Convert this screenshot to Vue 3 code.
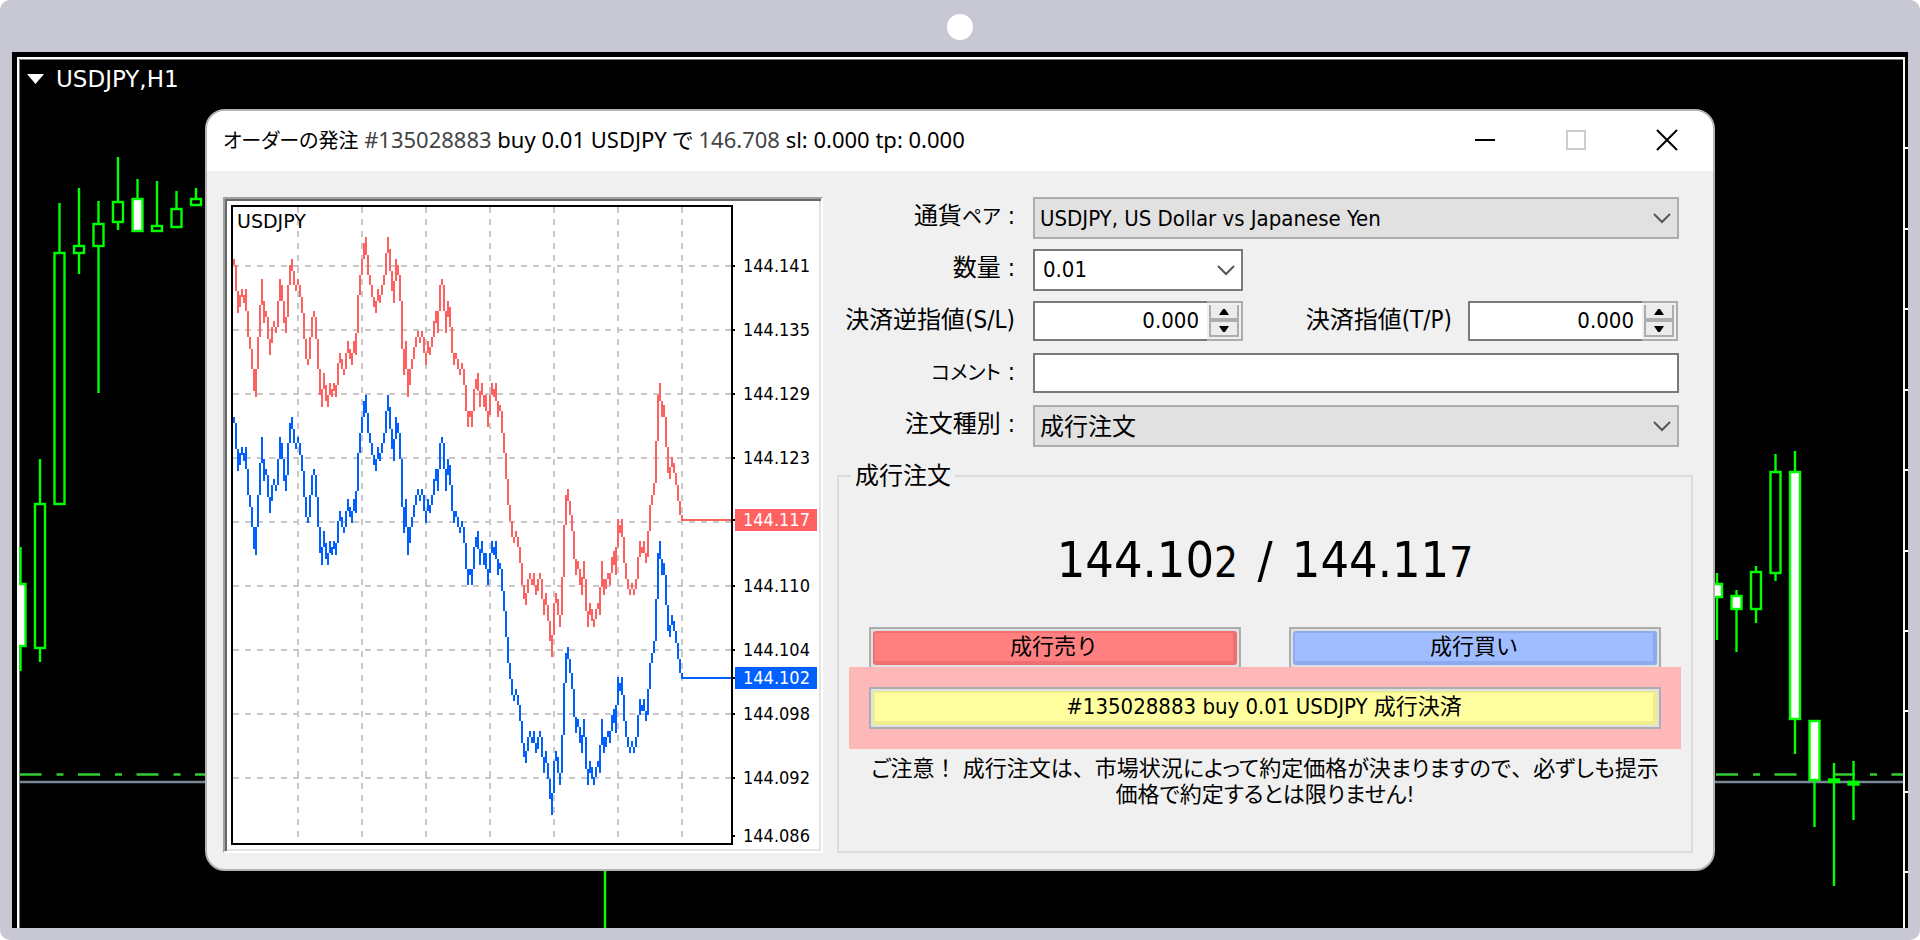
<script setup>
import { ref } from 'vue'

const candles = [
  { x: 20.5, high: 547, top: 583, bottom: 647, low: 671, kind: 'down' },
  { x: 40, high: 459, top: 503, bottom: 649, low: 662, kind: 'up' },
  { x: 59.5, high: 203, top: 252, bottom: 505, low: 505, kind: 'up' },
  { x: 79, high: 188, top: 245, bottom: 254, low: 274, kind: 'up' },
  { x: 98.5, high: 201, top: 223, bottom: 247, low: 393, kind: 'up' },
  { x: 118, high: 157, top: 201, bottom: 223, low: 230, kind: 'up' },
  { x: 137.5, high: 179, top: 198, bottom: 232, low: 232, kind: 'down' },
  { x: 157, high: 181, top: 225, bottom: 232, low: 232, kind: 'up' },
  { x: 176.5, high: 191, top: 208, bottom: 228, low: 228, kind: 'up' },
  { x: 196, high: 188, top: 198, bottom: 206, low: 206, kind: 'up' },
  { x: 605, high: 840, top: 840, bottom: 850, low: 940, kind: 'up' },
  { x: 1717, high: 573, top: 583, bottom: 598, low: 640, kind: 'down' },
  { x: 1736.5, high: 590, top: 595, bottom: 610, low: 652, kind: 'down' },
  { x: 1756, high: 566, top: 571, bottom: 610, low: 623, kind: 'up' },
  { x: 1775.5, high: 454, top: 471, bottom: 574, low: 581, kind: 'up' },
  { x: 1795, high: 451, top: 471, bottom: 720, low: 754, kind: 'down' },
  { x: 1814.5, high: 720, top: 720, bottom: 781, low: 827, kind: 'down' },
  { x: 1834, high: 763, top: 778.5, bottom: 783, low: 886, kind: 'doji' },
  { x: 1853.5, high: 761, top: 781, bottom: 785.5, low: 820, kind: 'doji' }
]
const scaleTicks = [148, 229, 309, 390, 470, 551, 631, 711, 792, 872]

// One "top,bottom" span per tick column, in chart units.
const spans = `26,29 29,42 42,53 44,50 41,45 44,48 41,52 52,65 65,71 71,81 81,92 81,95 65,81 49,65 36,49 47,58
52,55 55,66 66,74 60,68 57,60 60,63 47,60 36,47 39,47 47,58 55,63 39,55 29,39 26,32 32,39 39,42
36,39 39,45 45,53 53,66 66,76 76,79 65,76 55,65 52,55 55,66 66,81 81,94 91,100 83,91 89,97 94,100
88,94 91,95 88,92 89,95 78,89 73,78 76,81 81,84 73,81 67,73 71,76 73,79 67,73 63,74 44,63 34,44
26,34 18,26 15,24 24,34 34,39 39,45 45,50 47,53 41,47 44,48 39,44 34,39 23,34 15,23 21,32 32,42
37,48 26,37 29,34 34,47 47,71 71,84 67,81 81,95 81,89 76,81 70,76 65,70 62,65 65,68 62,65 65,73
73,79 67,73 70,74 65,70 57,65 52,58 52,63 39,52 36,39 39,52 52,63 47,55 50,60 60,73 73,79 73,76
76,81 81,84 78,81 81,89 89,102 102,110 102,105 102,110 91,102 86,91 83,92 92,100 88,94 94,100 94,102 102,110
94,104 88,94 91,95 88,97 97,105 99,102 102,113 113,123 123,136 136,149 149,157 157,165 165,168 162,165 165,170 170,178
178,189 189,196 193,199 186,193 183,186 186,189 183,189 189,194 186,192 183,186 186,196 196,204 193,199 199,207 207,217 214,225
198,214 193,198 196,204 204,210 185,204 159,185 144,159 141,147 147,154 154,162 162,176 176,184 177,181 181,189 185,194 177,186
186,202 202,210 198,204 201,207 206,210 201,206 198,201 190,204 177,190 186,194 186,191 183,186 183,189 175,183 172,179 170,184
156,170 159,163 156,165 165,178 178,186 186,191 191,194 188,191 191,194 186,191 175,186 167,175 170,173 167,173 173,178 162,175
149,162 144,149 138,144 117,138 94,117 88,97 97,105 99,105 105,120 120,133 130,136 125,130 128,133 133,139 139,147 147,154
154,157`.split(/\s+/).map((s) => s.split(',').map(Number))

const tickPath = (shift) =>
  spans.map(([a, b], i) => `M${i + 0.5} ${a + shift}V${b + shift}`).join('') + `M225 ${156.5 + shift}H249`
const askPath = tickPath(0)
const bidPath = tickPath(79)

const gridX = [32, 64, 96, 128, 160, 192, 224]
const gridY = [29, 61, 93, 125, 157, 189, 221, 253, 285]
const axis = [
  { text: '144.141', y: 61 },
  { text: '144.135', y: 125 },
  { text: '144.129', y: 189 },
  { text: '144.123', y: 253 },
  { text: '144.117', y: 315, tag: 'ask' },
  { text: '144.110', y: 381 },
  { text: '144.104', y: 445 },
  { text: '144.102', y: 473, tag: 'bid' },
  { text: '144.098', y: 509 },
  { text: '144.092', y: 573 },
  { text: '144.086', y: 631 }
]

const symbol = ref('USDJPY, US Dollar vs Japanese Yen')
const volume = ref('0.01')
const stopLoss = ref('0.000')
const takeProfit = ref('0.000')
const comment = ref('')
const orderType = ref('成行注文')
</script>

<template>
  <div class="device">
    <header class="bezel"><span class="camera"></span></header>
    <main class="terminal">
      <svg class="backdrop" viewBox="12 52 1896 876" preserveAspectRatio="none" aria-hidden="true">
        <path d="M19.5 940V59.5H1903" fill="none" stroke="#777" stroke-width="1" />
        <path d="M19.5 774.5H1903" stroke="#32cd32" stroke-width="2.4" stroke-dasharray="22 15 7 14.5" />
        <path d="M19.5 782H1905" stroke="#778899" stroke-width="2.4" />
        <g v-for="c in candles" :key="c.x" :class="['candle', c.kind]">
          <path :d="`M${c.x} ${c.high}V${c.low}`" />
          <rect :x="c.x - 5" :y="c.top + 1" width="10" :height="c.bottom - c.top - 2" />
        </g>
        <path d="M12 52H17V940H12Z" fill="#000" />
        <path d="M18 940V58H1905" fill="none" stroke="#fff" stroke-width="2" />
        <path d="M1904 57V940" stroke="#f4f4f0" stroke-width="2" />
        <path v-for="t in scaleTicks" :key="t" :d="`M1904 ${t}H1908`" stroke="#fff" stroke-width="2" />
      </svg>
      <div class="chart-title">
        <svg width="17" height="10" viewBox="0 0 17 10" aria-hidden="true"><path d="M0 0H17L8.5 10Z" fill="#fff" /></svg>
        <span>USDJPY,H1</span>
      </div>

      <section class="dialog" role="dialog" aria-labelledby="dlg-title">
        <div class="titlebar">
          <h1 id="dlg-title"><span class="kana">オーダーの発注</span> <span class="soft">#135028883</span> buy 0.01 USDJPY で <span class="soft">146.708</span> sl: 0.000 tp: 0.000</h1>
          <div class="controls">
            <button type="button" aria-label="最小化"><svg width="22" height="22" viewBox="0 0 22 22"><path d="M1 11H21" stroke="#000" stroke-width="2" /></svg></button>
            <button type="button" aria-label="最大化" disabled><svg width="22" height="22" viewBox="0 0 22 22"><rect x="2" y="2" width="18" height="18" fill="none" stroke="#ccc" stroke-width="2" /></svg></button>
            <button type="button" aria-label="閉じる"><svg width="22" height="22" viewBox="0 0 22 22"><path d="M1 1L21 21M21 1L1 21" stroke="#000" stroke-width="2" /></svg></button>
          </div>
        </div>

        <form class="body" @submit.prevent>
          <div class="tick-panel">
            <div class="plot">
              <svg viewBox="0 0 249 318" preserveAspectRatio="none" shape-rendering="crispEdges" role="img" aria-label="USDJPY tick chart">
                <g stroke="#c8c8c8" stroke-dasharray="3 3">
                  <path v-for="x in gridX" :key="'x' + x" :d="`M${x + 0.5} 0V318`" />
                  <path v-for="y in gridY" :key="'y' + y" :d="`M0 ${y + 0.5}H249`" />
                </g>
                <path :d="askPath" stroke="#ff6060" fill="none" />
                <path :d="bidPath" stroke="#0060ff" fill="none" />
              </svg>
              <span class="plot-name">USDJPY</span>
            </div>
            <ul class="axis">
              <li v-for="a in axis" :key="a.text" :class="a.tag" :style="{ top: a.y + 'px' }">{{ a.text }}</li>
            </ul>
          </div>

          <div class="order">
            <div class="fields">
              <label for="f-symbol">通貨<span class="kana">ペア</span> :</label>
              <div class="combo">
                <select id="f-symbol" v-model="symbol"><option>USDJPY, US Dollar vs Japanese Yen</option></select>
                <svg width="18" height="12" viewBox="0 0 18 12" aria-hidden="true"><path d="M1 2L9 10L17 2" /></svg>
              </div>

              <label for="f-volume">数量 :</label>
              <div class="combo light">
                <select id="f-volume" v-model="volume"><option>0.01</option></select>
                <svg width="18" height="12" viewBox="0 0 18 12" aria-hidden="true"><path d="M1 2L9 10L17 2" /></svg>
              </div>

              <label for="f-sl">決済逆指値(S/L)</label>
              <div class="pair">
                <div class="spin">
                  <input id="f-sl" v-model="stopLoss" type="text" />
                  <div class="arrows">
                    <button type="button" aria-label="S/L 増"><svg width="10" height="6" viewBox="0 0 10 6"><path d="M0 6L4 0H6L10 6Z" /></svg></button>
                    <button type="button" aria-label="S/L 減"><svg width="10" height="6" viewBox="0 0 10 6"><path d="M0 0L4 6H6L10 0Z" /></svg></button>
                  </div>
                </div>
                <label for="f-tp">決済指値(T/P)</label>
                <div class="spin">
                  <input id="f-tp" v-model="takeProfit" type="text" />
                  <div class="arrows">
                    <button type="button" aria-label="T/P 増"><svg width="10" height="6" viewBox="0 0 10 6"><path d="M0 6L4 0H6L10 6Z" /></svg></button>
                    <button type="button" aria-label="T/P 減"><svg width="10" height="6" viewBox="0 0 10 6"><path d="M0 0L4 6H6L10 0Z" /></svg></button>
                  </div>
                </div>
              </div>

              <label for="f-comment"><span class="kana">コメント</span> :</label>
              <input id="f-comment" v-model="comment" class="comment" type="text" />

              <label for="f-type">注文種別 :</label>
              <div class="combo jp">
                <select id="f-type" v-model="orderType"><option>成行注文</option></select>
                <svg width="18" height="12" viewBox="0 0 18 12" aria-hidden="true"><path d="M1 2L9 10L17 2" /></svg>
              </div>
            </div>

            <fieldset>
              <legend>成行注文</legend>
              <div class="market">
                <p class="quote">144.10<small>2</small><span class="slash"> / </span>144.11<small>7</small></p>
                <div class="sides">
                  <button type="button" class="trade sell"><span>成行売り</span></button>
                  <button type="button" class="trade buy"><span>成行買い</span></button>
                </div>
                <div class="highlight">
                  <button type="button" class="trade close"><span>#135028883 buy 0.01 USDJPY 成行決済</span></button>
                </div>
                <p class="note">ご注意<span class="full">！</span> 成行注文は<span class="full">、</span>市場状況によって約定価格が決まりますので<span class="full">、</span>必ずしも提示<br />価格で約定するとは限りません!</p>
              </div>
            </fieldset>
          </div>
        </form>
      </section>
    </main>
  </div>
</template>

<style>
body { margin: 0; background: #fff; }
</style>

<style scoped>
* { box-sizing: border-box; }
.device {
  min-height: 100vh;
  display: flex;
  flex-direction: column;
  padding: 0 12px 12px;
  background: #c8c8d4;
  border-radius: 10px;
  font-family: "DejaVu Sans Condensed", "Noto Sans CJK JP", sans-serif;
  font-size: 22px;
  line-height: 26px;
  color: #000;
}
button, input, select { font: inherit; color: inherit; margin: 0; border-radius: 0; }
.bezel { height: 52px; display: flex; justify-content: center; align-items: center; padding-top: 2px; }
.camera { width: 26px; height: 26px; border-radius: 50%; background: #fff; }
.terminal { flex: 1; position: relative; background: #000; padding: 14px 193px 57px; overflow: hidden; }
.backdrop { position: absolute; inset: 0; width: 100%; height: 100%; }
.candle path { stroke: #00ff00; stroke-width: 2.4; }
.candle rect { stroke: #00ff00; stroke-width: 2.4; fill: #000; }
.candle.down rect { fill: #fff; }
.candle.doji rect { fill: #00ff00; }
.chart-title {
  position: relative;
  display: flex;
  align-items: center;
  gap: 12px;
  height: 26px;
  margin: 0 0 17px -178px;
  color: #fff;
  font-family: "DejaVu Sans", sans-serif;
  font-size: 23px;
}
.dialog {
  position: relative;
  border: 2px solid #b4b4b4;
  border-radius: 20px;
  background: #f0f0f0;
  overflow: hidden;
}
.titlebar { height: 60px; background: #fff; display: flex; justify-content: space-between; align-items: center; padding: 0 1px 2px 16px; }
h1 { margin: 0; font-size: 22px; font-weight: 400; white-space: nowrap; font-family: "Noto Sans", "Noto Sans CJK JP", sans-serif; font-feature-settings: "palt"; }
.kana { font-size: 20px; }
.soft { color: #444; }
.controls { display: flex; }
.controls button { width: 91px; height: 58px; padding: 0; border: 0; background: none; display: grid; place-items: center; }
.body { display: grid; grid-template-columns: minmax(0, 600px) minmax(0, 1fr); gap: 14px; padding: 26px 20px 16px 16px; }

.tick-panel {
  display: flex;
  padding: 6px 2px 6px 6px;
  background: #fff;
  border: 2px solid;
  border-color: #a0a0a0 #fff #fff #a0a0a0;
  box-shadow: inset 2px 2px #696969, inset -2px -2px #e3e3e3;
}
.plot { position: relative; flex: 1; border: 2px solid #000; }
.plot svg { display: block; width: 100%; height: 636px; }
.plot-name { position: absolute; left: 4px; top: 4px; font-family: "DejaVu Sans", sans-serif; font-size: 19px; line-height: 20px; }
.axis { position: relative; width: 86px; margin: 0; padding: 0; list-style: none; font-size: 18px; line-height: 22px; }
.axis li { position: absolute; left: 2px; width: 82px; height: 22px; margin-top: -11px; padding-left: 8px; }
.axis li::before { content: ""; position: absolute; left: -2px; top: 10px; width: 2px; height: 2px; background: #000; }
.axis .ask { background: #ff6060; color: #fff; }
.axis .bid { background: #0060ff; color: #fff; }

.order { display: flex; flex-direction: column; }
.fields {
  display: grid;
  grid-template-columns: 178px minmax(0, 1fr);
  grid-auto-rows: 42px;
  gap: 10px 18px;
  padding-right: 14px;
}
.fields label { text-align: right; font-size: 24px; line-height: 39px; white-space: nowrap; font-feature-settings: "palt"; }
.combo { position: relative; height: 42px; }
.combo select {
  appearance: none;
  width: 100%;
  height: 42px;
  padding: 2px 40px 0 5px;
  border: 2px solid #adadad;
  background: #e1e1e1;
}
.combo svg { position: absolute; right: 8px; top: 15px; fill: none; stroke: #555; stroke-width: 2; pointer-events: none; }
.combo.light { width: 210px; }
.combo.light select { background: #fff; border-color: #7a7a7a; padding: 0 40px 0 8px; }
.combo.jp select { font-size: 24px; }
.pair { display: flex; justify-content: space-between; align-items: flex-start; padding-right: 1px; }
.pair label { margin-left: auto; margin-right: 16px; }
.spin { display: flex; width: 210px; height: 40px; }
.spin input { flex: 1; min-width: 0; border: 2px solid #7a7a7a; border-right: 0; background: #fff; text-align: right; padding: 0 8px 0 4px; }
.arrows { width: 36px; display: flex; flex-direction: column; border: 2px solid #adadad; border-left: 0; padding: 2px; background: #f0f0f0; }
.arrows button { flex: 1; padding: 0; border: 2px solid #adadad; background: #ececec; display: grid; place-items: center; }
.arrows button:first-child { border-top: 0; }
.comment { width: 100%; height: 40px; border: 2px solid #7a7a7a; background: #fff; padding: 0 6px; }

fieldset { margin: 16px 0 0; padding: 0 30px; border: 2px solid #dcdcdc; flex: 1; min-width: 0; }
legend { margin-left: -18px; padding: 0 4px; font-size: 24px; line-height: 26px; }
.market { display: flex; flex-direction: column; }
.quote { margin: 40px 0 33px; text-align: center; font-size: 50px; line-height: 62px; }
.quote small { font-size: 42px; }
.slash { margin: 0 5px; }
.sides { display: grid; grid-template-columns: 1fr 1fr; gap: 48px; }
.trade { width: 100%; height: 42px; padding: 2px; border: 2px solid #adadad; background: #e1e1e1; }
.trade span {
  display: block;
  height: 34px;
  line-height: 28px;
  border: 2px solid;
  border-width: 2px 4px 4px 2px;
  border-radius: 3px;
  white-space: nowrap;
}
.sell span { background: #ff8080; border-color: #ee7070; }
.buy span { background: #a0beff; border-color: #8caaee; }
.close span { background: #ffff9f; border-color: #eeee8c; }
.highlight { position: relative; margin: -2px -20px 0; padding: 20px; height: 82px; background: #ffb8b8; }
.note { margin: 7px 0 0; text-align: center; white-space: nowrap; font-feature-settings: "palt"; }
.full { font-feature-settings: normal; }
</style>
